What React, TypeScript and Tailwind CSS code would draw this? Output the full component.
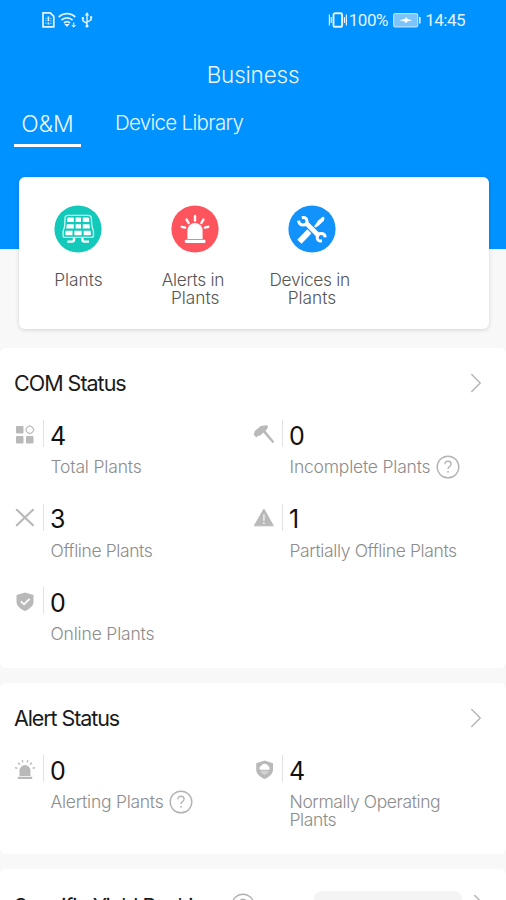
import React from 'react';
import { ChevronRight } from 'lucide-react';

type IconName = 'total' | 'hammer' | 'cross' | 'warning' | 'shieldCheck' | 'siren' | 'shieldCloud';

interface Stat {
  icon: IconName;
  value: number;
  label: string;
  labelClass: string;
  help?: boolean;
}

const comStats: Stat[] = [
  { icon: 'total', value: 4, label: 'Total Plants', labelClass: 'tracking-[-0.18px]' },
  { icon: 'hammer', value: 0, label: 'Incomplete Plants', labelClass: 'tracking-[-0.2px]', help: true },
  { icon: 'cross', value: 3, label: 'Offline Plants', labelClass: 'tracking-[-0.4px]' },
  { icon: 'warning', value: 1, label: 'Partially Offline Plants', labelClass: 'tracking-[-0.38px]' },
  { icon: 'shieldCheck', value: 0, label: 'Online Plants', labelClass: 'tracking-[-0.18px]' },
];

const alertStats: Stat[] = [
  { icon: 'siren', value: 0, label: 'Alerting Plants', labelClass: 'tracking-[-0.25px]', help: true },
  { icon: 'shieldCloud', value: 4, label: 'Normally Operating Plants', labelClass: 'tracking-[-0.4px]' },
];

const StatIcon: React.FC<{ name: IconName }> = ({ name }) => (
  <svg width="22" height="22" viewBox="0 0 22 22" fill="#b9b9b9" className="shrink-0">
    {name === 'total' && (
      <>
        <rect x="2" y="3" width="7.5" height="7.5" rx="1" />
        <rect x="2" y="13" width="7.5" height="7.5" rx="1" />
        <rect x="12" y="13" width="7.5" height="7.5" rx="1" />
        <path d="M15.8 2.8 18.4 4.3 19.9 6.8 18.4 9.3 15.8 10.8 13.2 9.3 11.7 6.8 13.2 4.3Z" fill="none" stroke="#b9b9b9" strokeWidth="1.2" strokeLinejoin="round" />
      </>
    )}
    {name === 'hammer' && (
      <>
        <path d="M.6 11.2 2 7.8 7.8 2.9 13.8 2.3 15.3 3.6 13.2 7 7.2 12.4 5.2 12.7 3.2 14.4Z" />
        <path d="m9.8 9 2-2 9.4 11.6-1.5 1.6Z" />
      </>
    )}
    {name === 'cross' && (
      <path d="M2.8 3.8 19 19.3M19 3.8 2.8 19.3" fill="none" stroke="#b9b9b9" strokeWidth="2.2" strokeLinecap="round" />
    )}
    {name === 'warning' && (
      <>
        <path d="M10.9 3 20.3 19.8H1.3Z" stroke="#b9b9b9" strokeWidth="1" strokeLinejoin="round" />
        <path d="M10.9 8.5v6.2M10.9 16.2v1.8" stroke="#e6e6e6" strokeWidth="1.8" />
      </>
    )}
    {name === 'shieldCheck' && (
      <>
        <path d="M11 2.5 19.5 5.1v6.6c0 4-3.6 7.2-8.5 9.2-4.9-2-8.5-5.2-8.5-9.2V5.1Z" />
        <path d="m6.8 11.4 3.2 3 5.6-5.6" fill="none" stroke="#fff" strokeWidth="1.7" />
      </>
    )}
    {name === 'siren' && (
      <>
        <path d="M5.5 17.9V12.6a5.5 5.5 0 0 1 11 0v5.3ZM3.8 18.7h14.4v2.4H3.8Z" />
        <path d="M.9 9.6l2.5.6M4.2 4.8l1.7 1.9M8.3 2.2l.5 2.2M13.7 2.2l-.5 2.2M17.8 4.8l-1.7 1.9M21.1 9.6l-2.5.6" stroke="#b9b9b9" strokeWidth="1.4" />
      </>
    )}
    {name === 'shieldCloud' && (
      <>
        <path d="M11.6 2.4 20 5.2v6.6c0 4-3.5 7.2-8.4 9.2-4.9-2-8.4-5.2-8.4-9.2V5.2Z" />
        <path d="M7 11.8a2.7 2.7 0 0 1 1.2-4 3.8 3.8 0 0 1 6.8 0 2.7 2.7 0 0 1 1.2 4Z" fill="#fff" />
        <path d="M7.4 12.8h8.4c-.4 2-2 3.5-4.2 4.3-2.2-.8-3.8-2.3-4.2-4.3Z" fill="#d2d2d2" />
      </>
    )}
  </svg>
);

const HelpIcon: React.FC = () => (
  <svg width="24" height="24" viewBox="0 0 24 24" fill="none" stroke="#b3b3b3" className="shrink-0">
    <circle cx="12" cy="12" r="10.8" strokeWidth="1.4" />
    <path d="M8.9 9.3c0-2 1.3-3.1 3.1-3.1s3.1 1.1 3.1 2.8c0 2.5-3.1 2.5-3.1 5.1M12 15.9v1.8" strokeWidth="1.4" />
  </svg>
);

const StatItem: React.FC<{ stat: Stat }> = ({ stat }) => (
  <div>
    <div className="flex h-[27px] items-center">
      <StatIcon name={stat.icon} />
      <div className="ml-[7px] h-[27px] w-px bg-[#e2e2e2]" />
      <span className="ml-[6px] pt-[5px] text-[25px] leading-[27px] text-[#111]">{stat.value}</span>
    </div>
    <div className="mt-[11px] flex min-h-[18px] items-center pl-[36.5px] text-[17.5px] font-light leading-[18px] text-[#8c8c8c]">
      <span className={stat.labelClass}>{stat.label}</span>
      {stat.help && (
        <span className="-my-[3px] ml-[6px]">
          <HelpIcon />
        </span>
      )}
    </div>
  </div>
);

const StatusSection: React.FC<{ title: string; titleClass: string; stats: Stat[] }> = ({ title, titleClass, stats }) => (
  <section className="mb-[15px] rounded-md bg-white pb-[25px] pl-[14px] pr-[20px] pt-[23px]">
    <div className="mb-[25px] flex h-6 items-center justify-between">
      <h2 className={`text-[21.5px] leading-6 text-[#1a1a1a] ${titleClass}`}>{title}</h2>
      <ChevronRight className="-mr-[7px] h-[34px] w-[34px] text-[#b5b5b5]" strokeWidth={1} />
    </div>
    <div className="grid grid-cols-[239px_1fr] gap-y-[27.5px]">
      {stats.map(s => (
        <StatItem key={s.label} stat={s} />
      ))}
    </div>
  </section>
);

const StatusBar: React.FC = () => (
  <div className="flex h-10 items-center justify-between pl-[42px] pr-[41px] text-[#e3f3ff]">
    <div className="flex items-center">
      <svg width="13" height="16" viewBox="0 0 13 16" fill="none" stroke="currentColor" strokeWidth="1.7">
        <path d="M1 .9h7.2L11.8 4.4v10.4H1Z" />
        <path d="M6.4 4.6v4.6M6.4 10.6v2" strokeWidth="1.7" />
        <path d="M3.9 6v1M3.9 8.2v1M3.9 10.6v1.4M8.9 6v1M8.9 8.2v1M8.9 10.6v1.4" strokeWidth=".8" />
      </svg>
      <svg width="18" height="16" viewBox="0 0 18 16" fill="none" stroke="currentColor" strokeWidth="1.8" className="ml-[3px]">
        <path d="M.8 5c4.6-4.6 11.8-4.6 16.4 0M3.4 8.2c3.2-3.1 8-3.1 11.2 0M6 11c1.9-1.7 4.1-1.7 6 0" />
        <path d="m6.4 12.1 2.6 3 2.6-3Z" fill="currentColor" stroke="none" />
        <path d="M15.7 10.6v3.2M13.8 13.2l1.9 1.6 1.9-1.6" strokeWidth="1.1" />
      </svg>
      <svg width="12" height="16" viewBox="0 0 12 16" fill="none" stroke="currentColor" strokeWidth="1.4" className="ml-[5px]">
        <path d="M6 2v12M6 11.3 1.9 8.8V6M6 10.2l4.1-2.3V5" />
        <path d="M6 0 8.2 3.4H3.8Z" fill="currentColor" stroke="none" />
        <circle cx="6" cy="14" r="1.6" fill="currentColor" stroke="none" />
        <path d="M.8 5h2.2v2.2H.8ZM9 4.2h2.2v2.2H9Z" fill="currentColor" stroke="none" />
      </svg>
    </div>
    <div className="flex items-center font-['Roboto',sans-serif] text-[17px] leading-5">
      <svg width="20" height="16" viewBox="0 0 20 16" fill="none" stroke="currentColor" strokeWidth="1.5">
        <rect x="5.5" y="1.2" width="8.6" height="13.6" rx="1.6" strokeWidth="1.9" />
        <path d="M1.4 2.4v11M3.2 5v6M18.4 2.4v11M16.5 5v6" strokeWidth="1.2" />
      </svg>
      <span className="ml-[1px] tracking-[-0.4px]">100%</span>
      <svg width="28" height="15" viewBox="0 0 28 15" className="ml-[5px]">
        <rect x=".7" y=".7" width="24" height="13.2" rx="1.5" fill="#7cc5fc" stroke="#b5defe" strokeWidth="1.2" />
        <path d="M26 4h1.7v6.6H26Z" fill="#c9e7ff" />
        <path d="M6.5 7.3 11.6 6l1.6-2 1.3 2 4.6 1.3-4.6 1.2-1.6 1.7-1.3-1.7Z" fill="#fff" />
      </svg>
      <span className="ml-[4px] tracking-[-0.5px]">14:45</span>
    </div>
  </div>
);

const PlantsIcon: React.FC = () => (
  <svg width="48" height="48" viewBox="0 0 48 48">
    <circle cx="24" cy="24" r="23.6" fill="#13c9b9" />
    <path d="M13.8 10.4h20.6q2.6 0 2.9 2.6l.6 8 1.6 5.6v3.8q0 2-2 2H11.1q-2 0-2-2v-3.8l1.6-5.6.3-8q.2-2.6 2.8-2.6Z" fill="none" stroke="#c9f7f1" strokeWidth="1.3" />
    <path
      d="M14.6 12.4h5.2v4.6h-6.6v-3.2q0-1.4 1.4-1.4ZM21.6 12.4h5.4v4.6h-5.4ZM28.8 12.4h5q1.4 0 1.4 1.4v3.2h-6.4ZM12.8 19.2h7v4.2h-7.6ZM21.6 19.2h5.4v4.2h-5.4ZM28.8 19.2h6.6l.6 4.2h-7.2ZM11.7 25.7h6.8v4.6H12.4q-1.2 0-1.2-1.2ZM20.4 25.7h7.2v4.6h-7.2ZM29.6 25.7h6.8l.6 3.4q0 1.2-1.2 1.2h-6.2Z"
      fill="#fff"
    />
    <path d="M20 33v1.8q0 1.8-1.8 1.8h-4.8M28.4 33v1.8q0 1.8 1.8 1.8h4.8" fill="none" stroke="#fff" strokeWidth="2.4" />
  </svg>
);

const AlertsIcon: React.FC = () => (
  <svg width="48" height="48" viewBox="0 0 48 48">
    <circle cx="24" cy="24" r="23.6" fill="#fd545d" />
    <path d="M16.4 34v-8.5a7.6 7.6 0 0 1 15.2 0V34Z" fill="#fff" />
    <rect x="13.8" y="34.7" width="20.6" height="3.3" rx="1" fill="#fff" />
    <path d="M24 11v4.6M15.6 14.6l2 3.4M32.4 14.6l-2 3.4M10.8 21.8l3.4.8M37.2 21.8l-3.4.8" stroke="#fff" strokeWidth="2.4" strokeLinecap="round" />
  </svg>
);

const DevicesIcon: React.FC = () => (
  <svg width="48" height="48" viewBox="0 0 48 48">
    <circle cx="24" cy="24" r="23.6" fill="#1292fb" />
    {/* Screwdriver */}
    <path d="m26 21.6 4.2-6 4.2-3.6q1.8-1 2 1.2l-.6 2.6-5 4.6-3.4 2.4Z" fill="#fff" />
    <path d="M19.4 28.4 13.4 34.6" stroke="#fff" strokeWidth="5.8" strokeLinecap="square" />
    {/* Wrench */}
    <path d="M18 18 31 31" stroke="#1292fb" strokeWidth="6.6" />
    <path d="M17.4 17.4 31 31" stroke="#fff" strokeWidth="4.6" />
    <path d="M13.8 12.8q5.2-1 5.2 3.4 0 3.8-3.8 3.8-4.2 0-4.6-4.4" fill="none" stroke="#fff" strokeWidth="3" strokeLinejoin="round" />
    <path d="M34 35.8q-4.8.8-4.8-3.4 0-3.8 3.8-3.8 4 0 4.2 3.8" fill="none" stroke="#fff" strokeWidth="3" strokeLinejoin="round" />
  </svg>
);

const shortcuts = [
  { icon: <PlantsIcon />, lines: ['Plants'] },
  { icon: <AlertsIcon />, lines: ['Alerts in\u00a0', 'Plants'] },
  { icon: <DevicesIcon />, lines: ['Devices in\u00a0', 'Plants'] },
];

export default function App() {
  return (
    <div className="h-[900px] w-[506px] overflow-hidden bg-[#f8f8f8] font-['Inter','Liberation_Sans',sans-serif]">
      {/* Header */}
      <header className="h-[249px] bg-[#0092ff] text-[#eaf6ff]">
        <StatusBar />
        <h1 className="pt-[21px] text-center text-[22.5px] font-light leading-7 tracking-[-0.2px]">Business</h1>
        <nav className="mt-[22px] flex pl-[14px] font-light">
          <div className="flex h-[36px] w-[67px] justify-center border-b-[3px] border-white text-[23px] leading-[27px]">
            <span>O&amp;M</span>
          </div>
          <span className="ml-[34px] text-[20.5px] leading-[24px] tracking-[-0.7px]">Device Library</span>
        </nav>
      </header>

      {/* Shortcuts */}
      <div className="relative mx-[19px] -mt-[72px] mb-[19px] grid h-[152px] w-[470px] grid-cols-4 rounded-md bg-white pl-px pr-[2px] pt-[28px] shadow-[0_1px_4px_rgba(0,0,0,0.15)]">
        {shortcuts.map((s, i) => (
          <div key={i} className="flex flex-col items-center">
            {s.icon}
            <div className="mt-[18px] text-center text-[17.3px] font-light leading-[18px] tracking-[-0.3px] text-[#555]">
              {s.lines.map(line => (
                <div key={line} className={line === 'Plants' ? 'tracking-[0px]' : undefined}>
                  {line}
                </div>
              ))}
            </div>
          </div>
        ))}
      </div>

      <StatusSection title="COM Status" titleClass="tracking-[-1px]" stats={comStats} />
      <StatusSection title="Alert Status" titleClass="tracking-[-1.1px]" stats={alertStats} />

      {/* Ranking */}
      <section className="flex h-[80px] items-start rounded-md bg-white pl-[14px] pr-[10px] pt-[22px]">
        <h2 className="w-[209px] whitespace-nowrap pt-[4px] text-[21px] leading-6 tracking-[-0.85px] text-[#1a1a1a]">Specific Yield Ranking</h2>
        <div className="ml-[8px] mt-[2px]">
          <HelpIcon />
        </div>
        <div className="ml-auto h-[30px] w-[148px] rounded-lg bg-[#f4f4f4]" />
        <ChevronRight className="-mt-[4px] h-[34px] w-[34px] text-[#b5b5b5]" strokeWidth={1} />
      </section>
    </div>
  );
}
